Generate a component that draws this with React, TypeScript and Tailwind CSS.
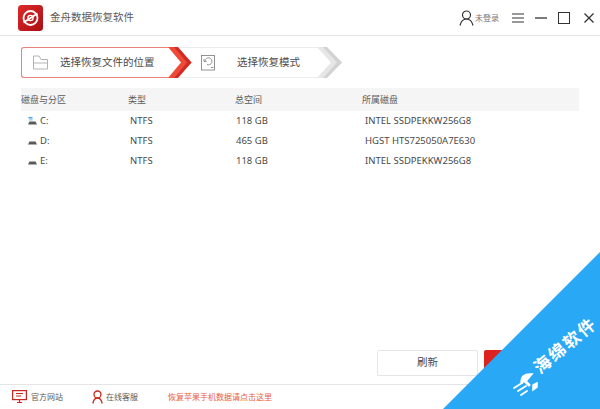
const cjk = "font-['Noto_Sans','Noto_Sans_CJK_SC',sans-serif]";

function Row({ icon, name, type, size, model }: { icon: React.ReactNode; name: string; type: string; size: string; model: string }) {
  return (
    <div className="flex h-[20px] items-center text-[9.500px] leading-none text-[#4a4a4a]">
      <div className="flex w-[109px] items-center pl-[7px]">
        {icon}
        <span className="ml-[3px]">{name}</span>
      </div>
      <div className="w-[106px]">{type}</div>
      <div className="w-[129px]">{size}</div>
      <div>{model}</div>
    </div>
  );
}

function Drive({ sys }: { sys?: boolean }) {
  return (
    <svg width="9" height="8" viewBox="0 0 9 8">
      {sys && <rect x="0.500" y="0" width="4" height="1.500" fill="#3ca7dc" />}
      {sys && <rect x="1" y="2.200" width="3.500" height="1.300" fill="#8ccbec" />}
      <path d="M1.500 4.500 H7.500 L9 7.500 H0 Z" fill="#5a5a5a" />
    </svg>
  );
}

export default function App() {
  return (
    <div className={`relative flex h-[409px] w-[600px] flex-col overflow-hidden bg-white ${cjk}`}>
      <header className="flex h-[36px] shrink-0 items-center border-b border-[#e4e4e4] pl-[18px] pr-[5px]">
        <svg width="25" height="26" viewBox="0 0 25 26" className="shrink-0">
          <defs>
            <linearGradient id="g" x1="0" y1="0" x2="1" y2="1">
              <stop offset="0" stopColor="#dd2a2a" />
              <stop offset="1" stopColor="#ab0f14" />
            </linearGradient>
          </defs>
          <rect width="25" height="26" rx="3.500" fill="url(#g)" />
          <circle cx="12.500" cy="13" r="7" fill="none" stroke="#fff" strokeWidth="1.800" />
          <circle cx="12.500" cy="13" r="2.600" fill="none" stroke="#fff" strokeWidth="1.400" />
          <path d="M5.500 17.500 L19.500 8.500" stroke="#fff" strokeWidth="1.800" />
        </svg>
        <span className="ml-[7px] text-[10.500px] text-[#5c5c5c]">金舟数据恢复软件</span>
        <div className="ml-auto flex items-center">
          <svg width="15" height="16" viewBox="0 0 15 16" fill="none" stroke="#333" strokeWidth="1.200">
            <circle cx="7.500" cy="5" r="4" />
            <path d="M1 15.500 C2 11 4.500 9 7.500 9 C10.500 9 13 11 14 15.500" />
          </svg>
          <span className="ml-[1px] w-[37px] text-[8px] text-[#777]">未登录</span>
          <svg width="12" height="10" viewBox="0 0 12 10" stroke="#333" strokeWidth="1.200">
            <path d="M0 1 H12 M0 5 H12 M0 9 H12" />
          </svg>
          <svg width="12" height="2" viewBox="0 0 12 2" stroke="#333" strokeWidth="1.300" className="ml-[11px]">
            <path d="M0 1 H12" />
          </svg>
          <div className="ml-[11px] h-[12px] w-[12px] border-[1.500px] border-[#333]" />
          <svg width="12" height="12" viewBox="0 0 12 12" stroke="#333" strokeWidth="1.300" className="ml-[13px]">
            <path d="M1.500 1.500 L10.500 10.500 M10.500 1.500 L1.500 10.500" />
          </svg>
        </div>
      </header>

      <div className="mt-[11px] flex h-[31px] shrink-0 pl-[21px]">
        <div className="flex h-full w-[148px] items-center rounded-l-[3px] border border-r-0 border-[#e8827c] pl-[11px]">
          <svg width="15" height="15" viewBox="0 0 15 15" fill="none" stroke="#aaa" strokeWidth="0.900">
            <path d="M0.500 14 V1 H6 L8 4.500 H14.500 V14 Z M0.500 8 H14.500" />
          </svg>
          <span className="ml-[12px] text-[10.500px] text-[#4a4a4a]">选择恢复文件的位置</span>
        </div>
        <svg width="24" height="31" viewBox="0 0 24 31" className="-ml-[1px] shrink-0">
          <path d="M0 0 H8 L23.500 15.500 L8 31 H0 L13 15.500 Z" fill="#ee4a38" />
          <path d="M6 0 H10 L23.500 15.500 L10 31 H6 L19 15.500 Z" fill="#d42a24" />
        </svg>
        <div className="-ml-[13px] flex h-full w-[144px] items-center border-y border-[#ececec] pl-[22px]">
          <svg width="15" height="16" viewBox="0 0 15 16" fill="none" stroke="#888" strokeWidth="0.900" className="shrink-0">
            <rect x="0.500" y="0.500" width="13" height="14.500" />
            <path d="M4 6 A3.500 3.500 0 1 1 6 9.500 M3 4 V6.500 H5.500" />
            <path d="M10 12.500 H12.500" />
          </svg>
          <span className="ml-[21px] text-[10.500px] text-[#4a4a4a]">选择恢复模式</span>
        </div>
        <svg width="26" height="31" viewBox="0 0 26 31" className="-ml-[6px] shrink-0">
          <path d="M0 0 H8 L25 15.500 L8 31 H0 L14 15.500 Z" fill="#e6e6e6" />
          <path d="M6 0 H10 L25 15.500 L10 31 H6 L20 15.500 Z" fill="#d2d2d2" />
        </svg>
      </div>

      <div className="mx-[21px] mt-[10px] flex h-[23px] shrink-0 items-center bg-[#f5f5f5] text-[9px] text-[#5c5c5c]">
        <div className="w-[107px]">磁盘与分区</div>
        <div className="w-[107px]">类型</div>
        <div className="w-[127px]">总空间</div>
        <div>所属磁盘</div>
      </div>

      <div className="ml-[21px] flex flex-col">
        <Row icon={<Drive sys />} name="C:" type="NTFS" size="118 GB" model="INTEL SSDPEKKW256G8" />
        <Row icon={<Drive />} name="D:" type="NTFS" size="465 GB" model="HGST HTS725050A7E630" />
        <Row icon={<Drive />} name="E:" type="NTFS" size="118 GB" model="INTEL SSDPEKKW256G8" />
      </div>

      <div className="mt-auto flex justify-start pl-[377px]">
        <div className="flex h-[26px] w-[101px] items-center justify-center rounded-[2px] border border-[#e6e6e6] text-[10.500px] text-[#4a4a4a]">
          刷新
        </div>
        <div className="ml-[6px] h-[26px] w-[101px] rounded-[2px] bg-[#dd2320]" />
      </div>

      <footer className="mt-[8px] flex h-[25px] shrink-0 items-center border-t border-[#e4e4e4] pl-[12px] text-[8px] text-[#5c5c5c]">
        <svg width="15" height="14" viewBox="0 0 15 14" fill="none" stroke="#c8281e" strokeWidth="1.200" className="shrink-0">
          <rect x="0.600" y="0.600" width="13.800" height="9" />
          <path d="M4 3.500 H11 M4 6 H9 M5 12.500 H10 M7.500 9.600 V12.500" />
        </svg>
        <span className="ml-[4px] w-[61px]">官方网站</span>
        <svg width="11" height="14" viewBox="0 0 11 14" fill="none" stroke="#c8281e" strokeWidth="1.300" className="shrink-0">
          <circle cx="5.500" cy="4.500" r="3.500" />
          <path d="M0.800 13.500 C1.500 10 3.500 8 5.500 8 C7.500 8 9.500 10 10.200 13.500" />
        </svg>
        <span className="ml-[3px] w-[62px]">在线客服</span>
        <span className="text-[8px] text-[#e8603c]">恢复苹果手机数据请点击这里</span>
      </footer>

      <div className="absolute bottom-0 right-0 h-[157px] w-[157px] bg-[#29a9f5] [clip-path:polygon(100%_0,100%_100%,0_100%)]" />
      <svg width="26" height="24" viewBox="0 0 26 24" className="absolute left-[513px] top-[373px]" fill="none" stroke="#fff" strokeLinecap="round">
        <path d="M9 9 C9 3 13 2 17 2 L12 8" strokeWidth="3.500" />
        <path d="M13 9 L16 12" strokeWidth="3" />
        <path d="M20 12 L24 10 L24 14 L20 17 Z" fill="#fff" strokeWidth="1.500" />
        <path d="M1 15 L9 10 M5 18 L13 13 M8 22 L14 18" strokeWidth="1.800" />
      </svg>
      <span className="absolute left-[565px] top-[345px] -translate-x-1/2 -translate-y-1/2 -rotate-[40deg] whitespace-nowrap text-[17px] font-bold leading-none tracking-[2px] text-white">
        海绵软件
      </span>
    </div>
  );
}
